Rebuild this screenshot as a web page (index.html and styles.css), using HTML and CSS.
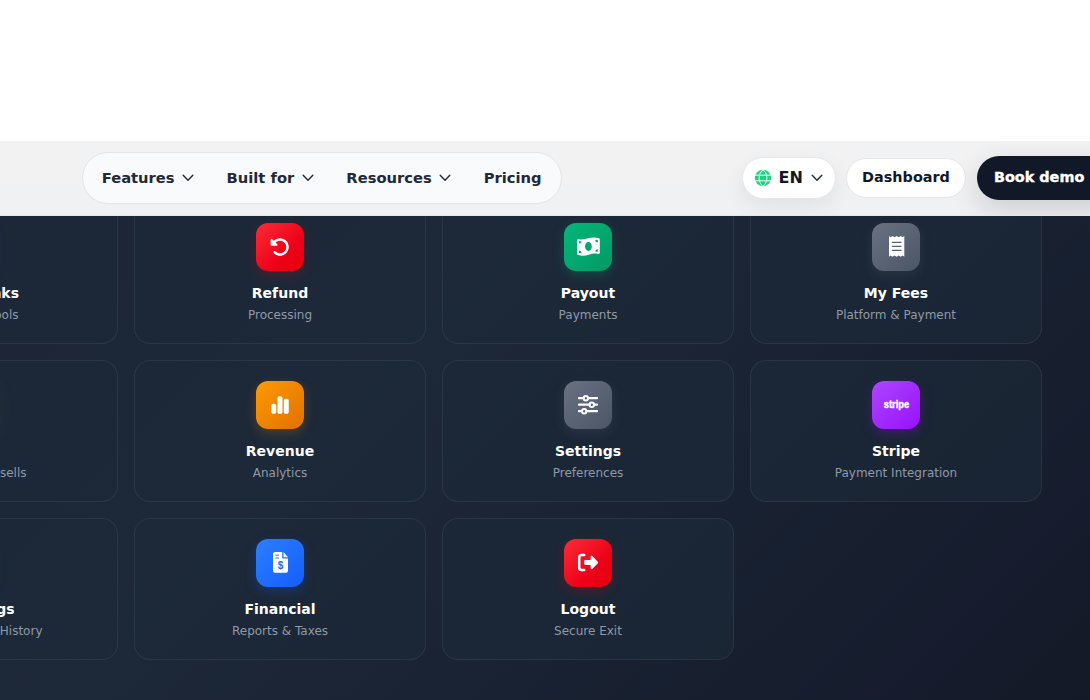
FILE: index.html
```html
<!DOCTYPE html>
<html lang="en">
<head>
<meta charset="utf-8">
<title>Dashboard</title>
<link rel="stylesheet" href="styles.css">
</head>
<body>
<div class="spacer"></div>
<header class="header">
  <nav class="nav">
    <a class="nav-item"><span>Features</span> <svg class="chevron" viewBox="0 0 12 8"><path d="M1.2 1.3 6 6.2l4.8-4.9"/></svg></a>
    <a class="nav-item"><span>Built for</span> <svg class="chevron" viewBox="0 0 12 8"><path d="M1.2 1.3 6 6.2l4.8-4.9"/></svg></a>
    <a class="nav-item"><span>Resources</span> <svg class="chevron" viewBox="0 0 12 8"><path d="M1.2 1.3 6 6.2l4.8-4.9"/></svg></a>
    <a class="nav-item"><span>Pricing</span></a>
  </nav>
  <div class="actions">
    <button class="pill lang">
      <svg class="globe" viewBox="0 0 18 18"><circle cx="9" cy="9" r="8.2" fill="#16d67e"/><path d="M0 6.2h18M0 11.8h18M9 .8C3.8 4.5 3.8 13.500 9 17.200M9 .8c5.200 3.700 5.200 12.700 0 16.400" fill="none" stroke="#fff" stroke-width="1"/></svg>
      <span>EN</span>
      <svg class="chevron" viewBox="0 0 12 8"><path d="M1.2 1.3 6 6.2l4.8-4.9"/></svg>
    </button>
    <button class="pill dash">Dashboard</button>
    <button class="pill demo">Book demo</button>
  </div>
</header>
<main class="panel">
  <div class="grid">
    <article class="card">
      <div class="icon violet"></div>
      <h3 class="edge w-links">Links</h3><p class="edge w-tools">Tools</p>
    </article>
    <article class="card">
      <div class="icon red"><svg class="fa" viewBox="0 0 512 512"><path d="M48.500 224H40c-13.300 0-24-10.700-24-24V72c0-9.700 5.800-18.500 14.800-22.200s19.300-1.700 26.200 5.200L98.600 96.600c87.600-86.500 228.700-86.200 315.800 1c87.500 87.500 87.500 229.300 0 316.800s-229.300 87.500-316.800 0c-12.500-12.500-12.500-32.800 0-45.300s32.800-12.500 45.300 0c62.500 62.500 163.800 62.500 226.300 0s62.500-163.800 0-226.300c-62.200-62.200-162.700-62.500-225.300-1L185 183c6.900 6.900 8.900 17.200 5.200 26.200s-12.500 14.800-22.200 14.800H48.500z"/></svg></div>
      <h3>Refund</h3><p>Processing</p>
    </article>
    <article class="card">
      <div class="icon green"><svg viewBox="0 0 48 48"><path fill-rule="evenodd" d="M13 17.500c0-1 .7-1.500 1.600-1.300 3.400.7 6.200 0 9.400-.9 3.500-1 6.900-1.300 10.600-.3.800.2 1.200.7 1.200 1.500v13.100c0 1-.7 1.500-1.600 1.300-3.400-.7-6.200 0-9.400.9-3.500 1-6.900 1.300-10.600.3-.8-.2-1.200-.7-1.200-1.500zM24.400 19.100c-1.900 0-3.400 2-3.400 4.400s1.500 4.400 3.400 4.400 3.400-2 3.400-4.400-1.500-4.400-3.400-4.400zM15 18.200v2.400c1.400 0 2.500-1 2.600-2.300zM15 27.400v2.500l2.600.3c0-1.600-1.100-2.800-2.600-2.800zM33.800 19.400V17l-2.600-.3c0 1.600 1.100 2.700 2.600 2.700zM33.800 28.700v-2.400c-1.400 0-2.500 1-2.600 2.300z"/></svg></div>
      <h3>Payout</h3><p>Payments</p>
    </article>
    <article class="card">
      <div class="icon gray"><svg viewBox="0 0 48 48"><path d="m17 13 1.600 1.200 1.900-1.200 1.900 1.200 2.200-1.200 2.200 1.200 1.900-1.200 1.900 1.200L32.300 13v20.700l-1.700-1.200-1.900 1.200-1.900-1.200-2.200 1.200-2.200-1.200-1.900 1.200-1.900-1.200-1.600 1.200z"/><path d="M20.300 19.400H29M20.300 23.400H29M20.300 27.400H29" stroke="#566172" stroke-width="1.100" stroke-linecap="round"/></svg></div>
      <h3>My Fees</h3><p>Platform &amp; Payment</p>
    </article>

    <article class="card">
      <div class="icon lime"></div>
      <h3></h3><p class="edge w-upsells">Upsells</p>
    </article>
    <article class="card">
      <div class="icon orange"><svg class="fa bars" viewBox="0 0 448 512"><path d="M160 80c0-26.500 21.500-48 48-48h32c26.500 0 48 21.500 48 48V432c0 26.500-21.500 48-48 48H208c-26.500 0-48-21.500-48-48V80zM0 272c0-26.500 21.500-48 48-48H80c26.500 0 48 21.500 48 48V432c0 26.500-21.500 48-48 48H48c-26.500 0-48-21.500-48-48V272zM368 96h32c26.500 0 48 21.500 48 48V432c0 26.500-21.500 48-48 48H368c-26.500 0-48-21.500-48-48V144c0-26.500 21.500-48 48-48z"/></svg></div>
      <h3>Revenue</h3><p>Analytics</p>
    </article>
    <article class="card">
      <div class="icon gray"><svg viewBox="0 0 48 48"><g fill="none" stroke="#fff" stroke-width="2.200" stroke-linecap="round"><path d="M15 17.200h4.500M24 17.200h9M15 23.700h10.500M30 23.700h3M15 30.200h2.500M22.500 30.200H33"/><circle cx="21.800" cy="17.200" r="2.200" stroke-width="2"/><circle cx="27.800" cy="23.700" r="2.200" stroke-width="2"/><circle cx="20.200" cy="30.200" r="2.200" stroke-width="2"/></g></svg></div>
      <h3>Settings</h3><p>Preferences</p>
    </article>
    <article class="card">
      <div class="icon purple"><svg viewBox="0 0 48 48"><text class="wordmark" x="11.700" y="26.900" textLength="25.500" lengthAdjust="spacingAndGlyphs">stripe</text></svg></div>
      <h3>Stripe</h3><p>Payment Integration</p>
    </article>

    <article class="card">
      <div class="icon teal"></div>
      <h3 class="edge w-bookings">Bookings</h3><p class="edge w-history">&amp; History</p>
    </article>
    <article class="card">
      <div class="icon blue"><svg viewBox="0 0 48 48"><path d="M19 13h7.200v5.400c0 .7.500 1.200 1.200 1.200H32v12.200a2 2 0 0 1-2 2H19a2 2 0 0 1-2-2V15a2 2 0 0 1 2-2zM27.500 13l4.500 5.200h-4.500z"/><path d="M19.700 16.200h3M19.700 19h3" stroke="#2873ff" stroke-width="1" stroke-linecap="round"/><text class="dollar" x="24.500" y="30.400" text-anchor="middle">$</text></svg></div>
      <h3>Financial</h3><p>Reports &amp; Taxes</p>
    </article>
    <article class="card">
      <div class="icon red"><svg viewBox="0 0 48 48"><path d="M20.200 16H17.800a2.600 2.600 0 0 0-2.600 2.600v9.800a2.600 2.600 0 0 0 2.600 2.600h2.400" fill="none" stroke="#fff" stroke-width="2.500" stroke-linecap="round"/><path d="M21.400 21.100h5.200v-3.200c0-1 1-1.400 1.700-.8l5.300 5.300c.6.600.6 1.600 0 2.200l-5.300 5.300c-.7.700-1.700.2-1.700-.8v-3.200h-5.200c-.7 0-1.200-.5-1.200-1.200v-2.400c0-.7.500-1.200 1.200-1.200z"/></svg></div>
      <h3>Logout</h3><p>Secure Exit</p>
    </article>
  </div>
</main>
</body>
</html>
```
FILE: styles.css
```css
* { box-sizing: border-box; }
body {
  margin: 0;
  height: 700px;
  overflow: hidden;
  display: flex;
  flex-direction: column;
  background: #fff;
  font-family: "DejaVu Sans", sans-serif;
}
.spacer { flex: 0 0 141px; background: #fff; }
.header {
  flex: 0 0 75px;
  display: flex;
  align-items: center;
  padding-left: 82px;
  background: linear-gradient(180deg, #f2f2f3, #f0f1f2);
  border-bottom: 1px solid #e3e7e9;
  overflow: hidden;
}
.nav {
  flex: none;
  display: flex;
  align-items: center;
  gap: 32.5px;
  width: 480px;
  height: 52px;
  padding: 0 18.7px;
  border: 1px solid #e2e5e9;
  border-radius: 26px;
  background: #f9fafc;
}
.nav-item {
  display: flex;
  align-items: center;
  gap: 7.5px;
  color: #1f2937;
  font-size: 14.72px;
  font-weight: 700;
  white-space: nowrap;
}
.nav-item span, .lang span { padding-bottom: 2px; }
.chevron {
  width: 12px;
  height: 8px;
  fill: none;
  stroke: #1f2937;
  stroke-width: 1.4;
  stroke-linecap: round;
  stroke-linejoin: round;
}
.actions {
  display: flex;
  align-items: center;
  flex: none;
  gap: 10px;
  margin-left: 180px;
}
.pill {
  flex: none;
  display: flex;
  align-items: center;
  padding: 0;
  border: 1px solid #e5e7eb;
  border-radius: 22px;
  background: #fff;
  color: #111827;
  font-family: inherit;
  font-size: 14.4px;
  font-weight: 700;
  white-space: nowrap;
}
.lang {
  width: 94px;
  height: 42px;
  padding: 0 11px;
  font-size: 16px;
  box-shadow: 0 8px 20px rgba(17, 24, 39, .07);
}
.globe { width: 18px; height: 18px; margin-right: 6.6px; }
.lang .chevron { margin-left: 8.4px; }
.dash { width: 120px; height: 40px; justify-content: center; padding-bottom: 2px; }
.demo {
  width: 142px;
  height: 44px;
  margin-left: 1px;
  padding: 0 0 2px 17px;
  border: 0;
  background: #111827;
  color: #fff;
  -webkit-text-stroke: .4px #fff;
  box-shadow: 0 10px 28px rgba(30, 20, 39, .16);
}
.panel {
  flex: 1;
  min-height: 0;
  overflow: hidden;
  background: linear-gradient(135deg, #1c2637 0%, #1d2838 35%, #171f2f 76%, #161c2d 88%, #141926 100%);
}
.grid {
  display: grid;
  grid-template-columns: repeat(4, 292px);
  grid-auto-rows: 142px;
  gap: 16px;
  margin: -14px 0 0 -174px;
}
.card {
  display: flex;
  flex-direction: column;
  align-items: center;
  padding-top: 20px;
  border: 1px solid rgba(255, 255, 255, .065);
  border-radius: 16px;
  background: rgba(29, 42, 56, .6);
}
.icon {
  flex: none;
  width: 48px;
  height: 48px;
  border-radius: 12px;
  display: flex;
  align-items: center;
  justify-content: center;
}
.icon svg { width: 48px; height: 48px; fill: #fff; }
.icon .fa { width: 20px; height: 20px; }
.red { background: linear-gradient(135deg, #fb2c36, #ec0018 65%, #e7000b); box-shadow: 0 4px 12px rgba(231, 0, 11, .22); }
.green { background: linear-gradient(135deg, #06b678, #009966); box-shadow: 0 4px 12px rgba(0, 153, 102, .3); }
.gray { background: linear-gradient(135deg, #6a7282, #4a5565); box-shadow: 0 4px 12px rgba(106, 114, 130, .2); }
.orange { background: linear-gradient(135deg, #fe9a00, #e17100); box-shadow: 0 4px 12px rgba(254, 154, 0, .22); }
.purple { background: linear-gradient(135deg, #ad46ff, #9810fa); box-shadow: 0 4px 12px rgba(152, 16, 250, .28); }
.blue { background: linear-gradient(135deg, #2b7fff, #155dfc); box-shadow: 0 4px 12px rgba(21, 93, 252, .28); }
.violet { background: #615fff; box-shadow: 0 4px 12px rgba(97, 95, 255, .12); }
.lime { background: #5ea500; box-shadow: 0 4px 20px rgba(94, 165, 0, .14); }
.teal { background: #009689; box-shadow: 0 4px 12px rgba(0, 150, 137, .1); }
.card h3 {
  height: 20px;
  margin: 12px 0 4px;
  color: #fff;
  font-size: 14px;
  line-height: 20px;
  font-weight: 700;
  white-space: nowrap;
}
.card p {
  margin: 0;
  color: #8f99a8;
  font-size: 12px;
  line-height: 16px;
  white-space: nowrap;
}
.card .edge { text-align: right; }
.w-links { width: 94px; }
.w-tools { width: 93px; }
.w-upsells { width: 109px; }
.w-bookings { width: 85px; }
.w-history { width: 141px; }
.wordmark { font: 700 11px "Liberation Sans", sans-serif; fill: #fff; stroke: #fff; stroke-width: .4px; }
.dollar { font: 700 10px "Liberation Sans", sans-serif; fill: #2068fd; }
```
